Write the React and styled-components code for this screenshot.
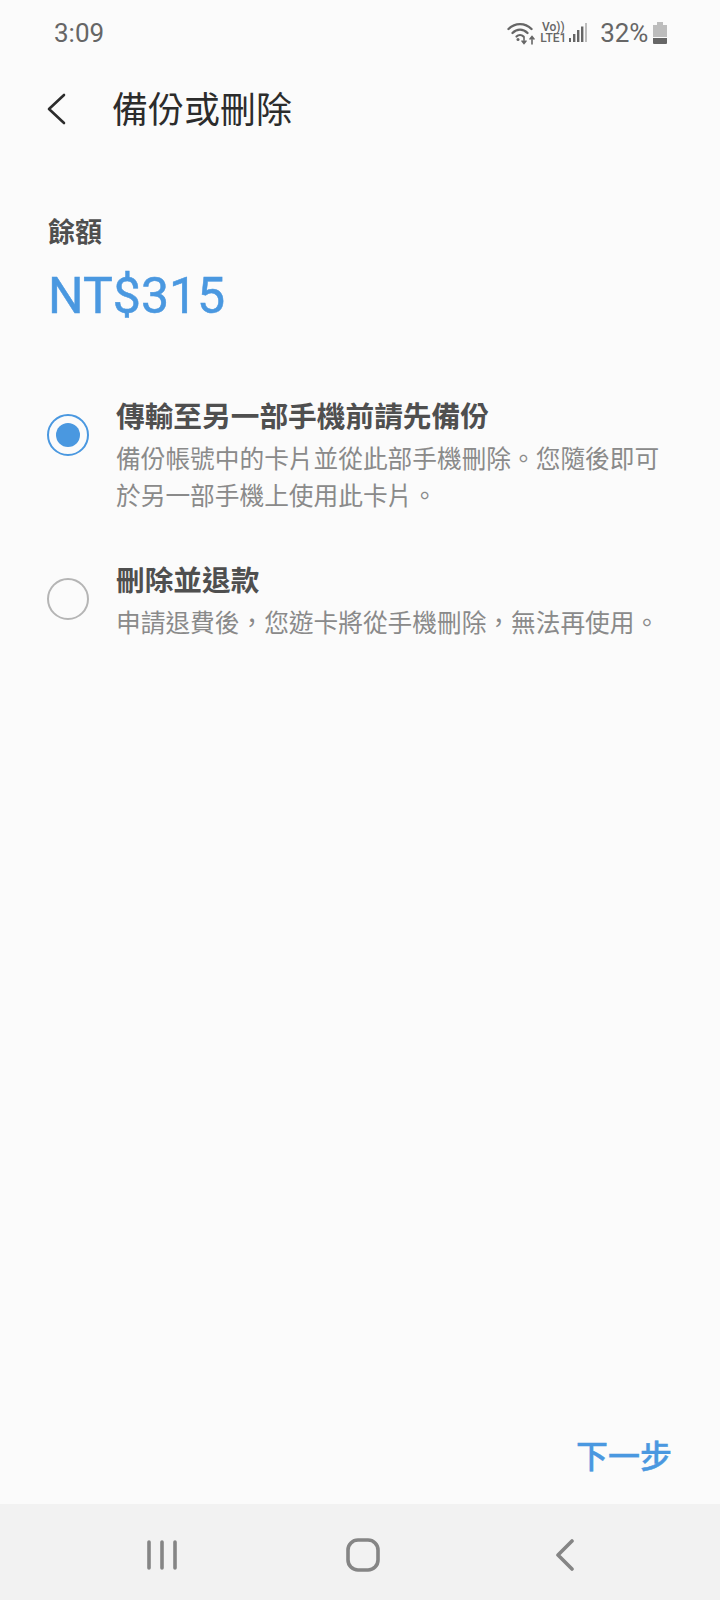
import React from "react";
import styled, { createGlobalStyle } from "styled-components";

const Global = createGlobalStyle`
  html, body { margin: 0; padding: 0; background: #fbfbfb; }
  body { font-family: Roboto, "Noto Sans CJK TC", sans-serif; }
`;
const Screen = styled.div`
  width: 720px; height: 1600px; display: flex; flex-direction: column; background: #fbfbfb; overflow: hidden;
`;
const StatusBar = styled.div`
  height: 66px; padding: 0 53px 0 54px; display: flex; align-items: center; justify-content: space-between;
  color: #666; font-size: 26px; font-family: Roboto, sans-serif; box-sizing: border-box;
`;
const StatusRight = styled.div`display: flex; align-items: center;`;
const Lte = styled.div`
  width: 26px; margin: 0 3px 0 3px; display: flex; flex-direction: column; align-items: center;
  font-size: 12px; line-height: 11px; font-weight: 500; color: #666; letter-spacing: 0;
`;
const Percent = styled.span`margin: 0 5px 0 13px; letter-spacing: -0.2px;`;
const Header = styled.div`
  height: 90px; display: flex; align-items: center; padding-left: 46px;
`;
const BackButton = styled.svg`width: 22px; height: 32px; flex: none; margin-top: -4px;`;
const Title = styled.h1`
  margin: 0 0 0 44px; font-size: 36px; line-height: 48px; font-weight: 400; color: #2c2c2c;
`;
const Balance = styled.section`
  padding: 59px 0 0 48px;
`;
const BalanceLabel = styled.div`font-size: 27px; line-height: 36px; font-weight: 700; color: #4f4f4f;`;
const BalanceValue = styled.div`
  margin-top: 15px; font-size: 50px; line-height: 60px; font-weight: 400; color: #4a98e0;
  font-family: Roboto, sans-serif; -webkit-text-stroke: 0.5px #4a98e0;
`;
const Options = styled.div`
  margin-top: 70px; padding: 0 46px 0 47px; display: flex; flex-direction: column; gap: 44.5px; flex: 1;
`;
const Option = styled.div`display: flex; align-items: flex-start; gap: 27px;`;
const Radio = styled.div`
  width: 42px; height: 42px; flex: none; margin-top: 18px; border-radius: 50%; box-sizing: border-box;
  border: ${p => (p.$on ? "2.5px solid #4a98e0" : "2px solid #b5b5b5")};
  display: flex; align-items: center; justify-content: center;
`;
const RadioDot = styled.div`width: 24px; height: 24px; border-radius: 50%; background: #4a98e0;`;
const OptionText = styled.div`display: flex; flex-direction: column; min-width: 0;`;
const OptionTitle = styled.div`font-size: 28.7px; line-height: 42px; font-weight: 700; color: #4f4f4f;`;
const OptionSub = styled.div`font-size: 24.7px; line-height: 37px; color: #8a8a8a; margin-top: 3px;`;
const Footer = styled.div`
  height: 65px; padding-right: 48px; display: flex; justify-content: flex-end; align-items: flex-start;
`;
const NextButton = styled.div`
  font-size: 32px; line-height: 36px; font-weight: 500; color: #4a98e0; -webkit-text-stroke: 0.4px #4a98e0;
`;
const NavBar = styled.div`
  height: 96px; padding-left: 147px; background: #f2f2f2; display: grid; grid-template-columns: 199px 209px 20px; align-items: center;
`;
const NavCell = styled.div`display: flex; padding-top: 6px;`;

const Wifi = () => (
  <svg width="30" height="24" viewBox="0 0 30 24" fill="none" stroke="#666" strokeLinecap="round">
    <path d="M1.5 8 C8 1.5 18 1.5 24.5 8" strokeWidth="2.4" />
    <path d="M5.5 12 C10 7.5 16 7.5 20.5 12" strokeWidth="2.4" />
    <path d="M9.5 15.5 C11.5 13.5 14.5 13.5 16.5 15.5" strokeWidth="2.2" />
    <circle cx="11" cy="18.5" r="1.5" fill="#666" stroke="none" />
    <path d="M17 16 v6 M15 20 l2 2.5 l2 -2.5" strokeWidth="1.6" />
    <path d="M25 23 v-7 M23 18 l2 -2.5 l2 2.5" strokeWidth="1.6" />
  </svg>
);
const Signal = () => (
  <svg width="18" height="20" viewBox="0 0 18 20">
    <rect x="0" y="15" width="2" height="4" fill="#666" />
    <rect x="4" y="11" width="2.4" height="8" fill="#666" />
    <rect x="8" y="7" width="2.4" height="12" fill="#666" />
    <rect x="12" y="3.5" width="2.4" height="15.5" fill="#666" />
    <rect x="16" y="0" width="2" height="19" fill="#bdbdbd" />
  </svg>
);
const Battery = () => (
  <svg width="14" height="22" viewBox="0 0 14 22">
    <rect x="4" y="0" width="6" height="3" fill="#bdbdbd" />
    <path d="M0 3 h14 v12 h-14 z" fill="#bdbdbd" />
    <path d="M0 16 h14 v5 a1 1 0 0 1 -1 1 h-12 a1 1 0 0 1 -1 -1 z" fill="#666" />
  </svg>
);

export default function App() {
  return (
    <Screen>
      <Global />
      <StatusBar>
        <span>3:09</span>
        <StatusRight>
          <Wifi />
          <Lte><span>Vo))</span><span>LTE1</span></Lte>
          <Signal />
          <Percent>32%</Percent>
          <Battery />
        </StatusRight>
      </StatusBar>
      <Header>
        <BackButton viewBox="0 0 22 32" fill="none" stroke="#2c2c2c" strokeWidth="2.6" strokeLinecap="round" strokeLinejoin="round">
          <path d="M18 2 L3 16 L18 30" />
        </BackButton>
        <Title>備份或刪除</Title>
      </Header>
      <Balance>
        <BalanceLabel>餘額</BalanceLabel>
        <BalanceValue>NT$315</BalanceValue>
      </Balance>
      <Options>
        <Option>
          <Radio $on><RadioDot /></Radio>
          <OptionText>
            <OptionTitle>傳輸至另一部手機前請先備份</OptionTitle>
            <OptionSub>備份帳號中的卡片並從此部手機刪除。您隨後即可於另一部手機上使用此卡片。</OptionSub>
          </OptionText>
        </Option>
        <Option>
          <Radio />
          <OptionText>
            <OptionTitle>刪除並退款</OptionTitle>
            <OptionSub>申請退費後，您遊卡將從手機刪除，無法再使用。</OptionSub>
          </OptionText>
        </Option>
      </Options>
      <Footer><NextButton>下一步</NextButton></Footer>
      <NavBar>
        <NavCell>
          <svg width="30" height="30" viewBox="0 0 30 30" stroke="#858585" strokeWidth="3.6" strokeLinecap="round">
            <path d="M2 2 V28 M15 2 V28 M28 2 V28" />
          </svg>
        </NavCell>
        <NavCell>
          <svg width="34" height="34" viewBox="0 0 34 34" fill="none" stroke="#858585" strokeWidth="3.6">
            <rect x="2" y="2" width="30" height="30" rx="10" />
          </svg>
        </NavCell>
        <NavCell>
          <svg width="20" height="32" viewBox="0 0 20 32" fill="none" stroke="#858585" strokeWidth="3.6" strokeLinecap="round" strokeLinejoin="round">
            <path d="M17 2 L3 16 L17 30" />
          </svg>
        </NavCell>
      </NavBar>
    </Screen>
  );
}
